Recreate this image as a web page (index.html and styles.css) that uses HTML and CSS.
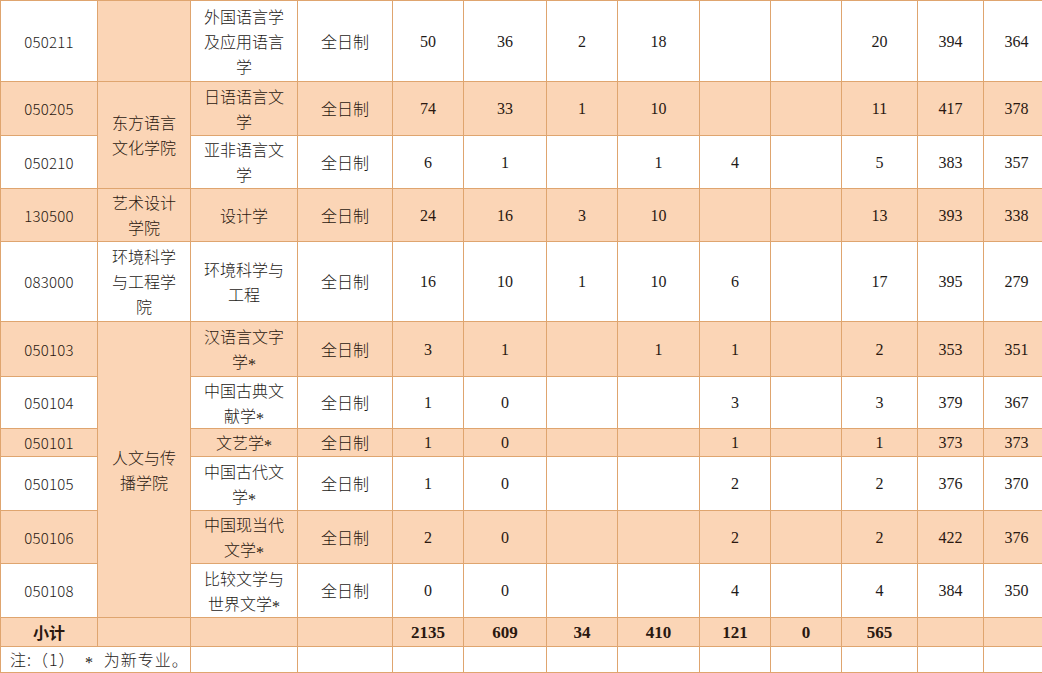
FILE: index.html
```html
<!DOCTYPE html>
<html lang="zh-CN">
<head>
<meta charset="utf-8">
<title>招生统计表</title>
<link rel="stylesheet" href="styles.css">
</head>
<body>
<table class="grid">
  <colgroup>
    <col class="c-code"><col class="c-college"><col class="c-major"><col class="c-type">
    <col class="c-n71"><col class="c-n83"><col class="c-n71"><col class="c-n82">
    <col class="c-n71"><col class="c-n71"><col class="c-n76"><col class="c-n66"><col class="c-n66">
  </colgroup>
  <tbody>
    <tr class="h81">
      <td class="code">050211</td><td class="cn fill"></td><td class="cn">外国语言学及应用语言学</td><td class="cn">全日制</td>
      <td class="num">50</td><td class="num">36</td><td class="num">2</td><td class="num">18</td><td></td><td></td><td class="num">20</td><td class="num">394</td><td class="num">364</td>
    </tr>
    <tr class="h54 alt">
      <td class="code">050205</td><td class="cn fill" rowspan="2">东方语言文化学院</td><td class="cn">日语语言文学</td><td class="cn">全日制</td>
      <td class="num">74</td><td class="num">33</td><td class="num">1</td><td class="num">10</td><td></td><td></td><td class="num">11</td><td class="num">417</td><td class="num">378</td>
    </tr>
    <tr class="h53">
      <td class="code">050210</td><td class="cn">亚非语言文学</td><td class="cn">全日制</td>
      <td class="num">6</td><td class="num">1</td><td></td><td class="num">1</td><td class="num">4</td><td></td><td class="num">5</td><td class="num">383</td><td class="num">357</td>
    </tr>
    <tr class="h53 alt">
      <td class="code">130500</td><td class="cn">艺术设计学院</td><td class="cn">设计学</td><td class="cn">全日制</td>
      <td class="num">24</td><td class="num">16</td><td class="num">3</td><td class="num">10</td><td></td><td></td><td class="num">13</td><td class="num">393</td><td class="num">338</td>
    </tr>
    <tr class="h80">
      <td class="code">083000</td><td class="cn">环境科学与工程学院</td><td class="cn">环境科学与工程</td><td class="cn">全日制</td>
      <td class="num">16</td><td class="num">10</td><td class="num">1</td><td class="num">10</td><td class="num">6</td><td></td><td class="num">17</td><td class="num">395</td><td class="num">279</td>
    </tr>
    <tr class="h55 alt">
      <td class="code">050103</td><td class="cn fill" rowspan="6">人文与传播学院</td><td class="cn">汉语言文字学<span class="star">*</span></td><td class="cn">全日制</td>
      <td class="num">3</td><td class="num">1</td><td></td><td class="num">1</td><td class="num">1</td><td></td><td class="num">2</td><td class="num">353</td><td class="num">351</td>
    </tr>
    <tr class="h52">
      <td class="code">050104</td><td class="cn">中国古典文献学<span class="star">*</span></td><td class="cn">全日制</td>
      <td class="num">1</td><td class="num">0</td><td></td><td></td><td class="num">3</td><td></td><td class="num">3</td><td class="num">379</td><td class="num">367</td>
    </tr>
    <tr class="h28 alt">
      <td class="code">050101</td><td class="cn">文艺学<span class="star">*</span></td><td class="cn">全日制</td>
      <td class="num">1</td><td class="num">0</td><td></td><td></td><td class="num">1</td><td></td><td class="num">1</td><td class="num">373</td><td class="num">373</td>
    </tr>
    <tr class="h54">
      <td class="code">050105</td><td class="cn">中国古代文学<span class="star">*</span></td><td class="cn">全日制</td>
      <td class="num">1</td><td class="num">0</td><td></td><td></td><td class="num">2</td><td></td><td class="num">2</td><td class="num">376</td><td class="num">370</td>
    </tr>
    <tr class="h53 alt">
      <td class="code">050106</td><td class="cn">中国现当代文学<span class="star">*</span></td><td class="cn">全日制</td>
      <td class="num">2</td><td class="num">0</td><td></td><td></td><td class="num">2</td><td></td><td class="num">2</td><td class="num">422</td><td class="num">376</td>
    </tr>
    <tr class="h54">
      <td class="code">050108</td><td class="cn">比较文学与世界文学<span class="star">*</span></td><td class="cn">全日制</td>
      <td class="num">0</td><td class="num">0</td><td></td><td></td><td class="num">4</td><td></td><td class="num">4</td><td class="num">384</td><td class="num">350</td>
    </tr>
    <tr class="h29 alt total">
      <td class="cn label">小计</td><td></td><td></td><td></td>
      <td class="num">2135</td><td class="num">609</td><td class="num">34</td><td class="num">410</td><td class="num">121</td><td class="num">0</td><td class="num">565</td><td></td><td></td>
    </tr>
    <tr class="h26">
      <td class="note" colspan="2">注:（1） <span class="star">*</span> 为新专业。</td><td></td><td></td>
      <td></td><td></td><td></td><td></td><td></td><td></td><td></td><td></td><td></td>
    </tr>
  </tbody>
</table>
</body>
</html>
```

FILE: styles.css
```css
html, body {
  margin: 0;
  padding: 0;
  background: #ffffff;
  overflow: hidden;
}

.grid {
  border-collapse: collapse;
  table-layout: fixed;
  width: 1049px;
  color: #1e1a18;
  font-family: "Noto Sans CJK SC", "Noto Sans", sans-serif;
  font-size: 16px;
  line-height: 25px;
}

.c-code { width: 97px; }
.c-college { width: 93px; }
.c-major { width: 107px; }
.c-type { width: 95px; }
.c-n71 { width: 71px; }
.c-n83 { width: 83px; }
.c-n82 { width: 82px; }
.c-n76 { width: 76px; }
.c-n66 { width: 66px; }

.grid td {
  border: 1px solid #dfa56f;
  padding: 0 7px;
  text-align: center;
  vertical-align: middle;
  overflow: hidden;
}

.alt td,
.grid td.fill {
  background: #fbd5b6;
}

.alt td { color: #2a1810; }

.h81 { height: 81px; }
.h80 { height: 80px; }
.h55 { height: 55px; }
.h54 { height: 54px; }
.h53 { height: 53px; }
.h52 { height: 52px; }
.h29 { height: 29px; }
.h28 { height: 28px; }
.h26 { height: 26px; }

.code {
  font-family: "Noto Sans CJK SC", "Noto Sans", sans-serif;
  font-size: 15px;
  font-weight: 300;
  letter-spacing: 0.2px;
}

.num {
  font-family: "Liberation Serif", "DejaVu Serif", serif;
  font-size: 16px;
}

.cn {
  font-family: "Noto Sans CJK SC", sans-serif;
  font-weight: 300;
}

.star {
  font-family: "Liberation Serif", serif;
  vertical-align: -2px;
  line-height: 1;
}

.total td { font-weight: 700; }
.total .num { font-size: 17px; }
.total .label { font-weight: 700; }

.grid td.note {
  text-align: left;
  padding-left: 9px;
  font-weight: 300;
  white-space: nowrap;
  letter-spacing: 1px;
  word-spacing: 5px;
}
```
